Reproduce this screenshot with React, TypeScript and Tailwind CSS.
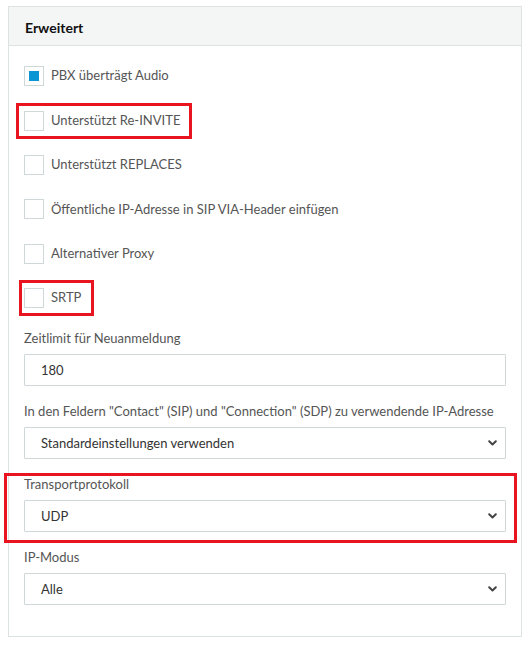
import React from "react";

const font = { fontFamily: "Lato, 'Noto Sans', sans-serif" };

function Chevron() {
  return (
    <svg width="9" height="6" viewBox="0 0 9 6" className="absolute right-[8px] top-1/2 -translate-y-1/2">
      <path d="M1.2 1.2 L4.5 4.5 L7.8 1.2" stroke="#444" strokeWidth="2" fill="none" strokeLinecap="round" strokeLinejoin="round" />
    </svg>
  );
}

function Check({ label, checked, box }: { label: string; checked?: boolean; box?: "a" | "b" }) {
  return (
    <div className="h-[44.4px] flex items-center">
      <div className="relative flex items-center">
        {box === "a" && <div className="absolute -left-2 -right-[12px] -top-2 -bottom-2 border-[3px] border-[#e8141f]" />}
        {box === "b" && <div className="absolute -left-[5px] -right-[13px] -top-2 -bottom-2 border-[3px] border-[#e8141f]" />}
        <div className="w-[20px] h-[20px] border border-[#cfd8d8] bg-white flex items-center justify-center">
          {checked && <div className="w-[10px] h-[10px] bg-[#0a95d3]" />}
        </div>
        <span className="ml-[7px] text-[13px] text-[#555]">{label}</span>
      </div>
    </div>
  );
}

function Field({ label, value, select, mb = true }: { label: string; value: string; select?: boolean; mb?: boolean }) {
  return (
    <div className={mb ? "mb-[15px]" : ""}>
      <div className="h-[20px] leading-[20px] text-[13px] text-[#555] whitespace-nowrap mb-[6px]">{label}</div>
      <div className="relative h-[32px] border border-[#cfd8d8] bg-white rounded-[1px] flex items-center pl-4 text-[13px] text-[#333]">
        {value}
        {select && <Chevron />}
      </div>
    </div>
  );
}

export default function App() {
  return (
    <div className="min-h-[647px] bg-white pl-2 pt-[6px]" style={font}>
      <div className="w-[514px] border border-[#dde3e3] bg-white">
        <div className="h-[39px] bg-[#f4f6f6] border-b border-[#dde3e3] flex items-center pt-[2px] px-4 text-[14px] font-bold text-[#111]">
          Erweitert
        </div>
        <div className="px-[15px] pt-[8px] pb-[31px]">
          <Check label="PBX überträgt Audio" checked />
          <Check label="Unterstützt Re-INVITE" box="a" />
          <Check label="Unterstützt REPLACES" />
          <Check label="Öffentliche IP-Adresse in SIP VIA-Header einfügen" />
          <Check label="Alternativer Proxy" />
          <Check label="SRTP" box="b" />
          <div className="mt-[8px]">
            <Field label="Zeitlimit für Neuanmeldung" value="180" />
            <Field
              label={'In den Feldern "Contact" (SIP) und "Connection" (SDP) zu verwendende IP-Adresse'}
              value="Standardeinstellungen verwenden"
              select
            />
            <div className="relative mb-[15px]">
              <div className="absolute -left-[20px] -right-[11px] -top-[1px] -bottom-[11px] border-[3px] border-[#e8141f] pointer-events-none" />
              <Field label="Transportprotokoll" value="UDP" select mb={false} />
            </div>
            <Field label="IP-Modus" value="Alle" select mb={false} />
          </div>
        </div>
      </div>
    </div>
  );
}
